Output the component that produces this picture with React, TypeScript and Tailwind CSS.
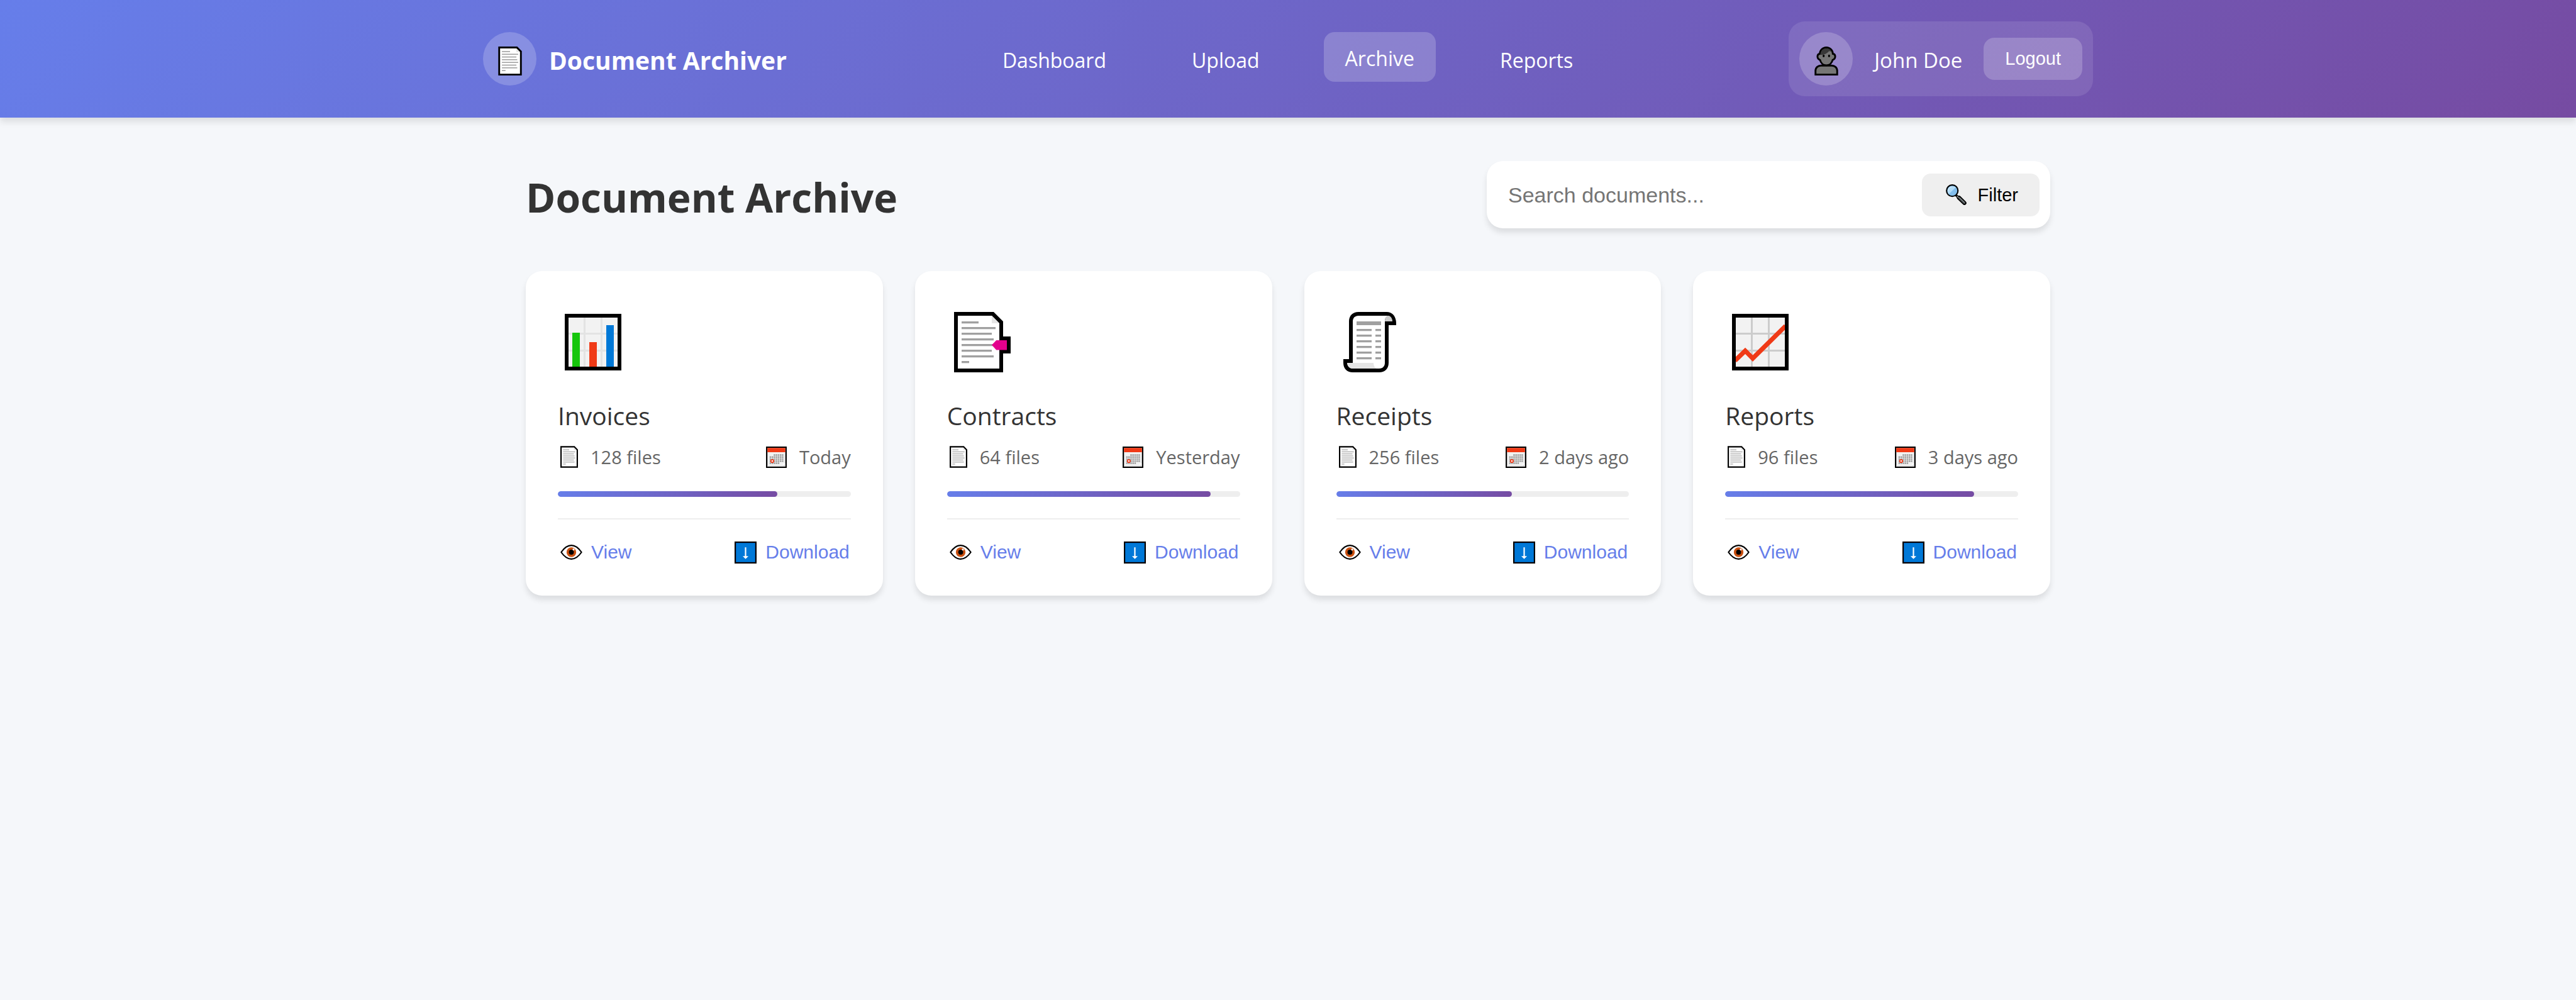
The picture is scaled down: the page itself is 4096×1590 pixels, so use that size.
import type { ReactNode } from "react";

const DOC_LINES: [number, number][] = [
  [2.5, 4.5], [4, 9], [5.5, 8], [7, 8.5], [8.5, 9], [10, 8], [11.5, 8.5], [13, 2],
];

function DocLines() {
  return (
    <>
      {DOC_LINES.map(([y, w]) => (
        <rect key={y} x="2" y={y} width={w} height=".55" fill="#a0a0a0" />
      ))}
    </>
  );
}

function PageIcon({ className }: { className: string }) {
  return (
    <svg viewBox="0 0 13 16" className={className} aria-hidden="true">
      <path d="M0 0H10.5L13 2.5V16H0Z" fill="#000" />
      <path d="M1 1H10L12 3V15H1Z" fill="#fff" />
      <path d="M10 1V3H12Z" fill="#e5e5e5" />
      <DocLines />
    </svg>
  );
}

function TabbedPageIcon() {
  return (
    <svg viewBox="0 0 16 16" className="size-24" aria-hidden="true">
      <path d="M0 0H10.5L13 2.5V6.5H15V11H13V16H0Z" fill="#000" />
      <path d="M1 1H10L12 3V15H1Z" fill="#fff" />
      <path d="M10 1V3H12Z" fill="#e5e5e5" />
      <DocLines />
      <path d="M10 8.75L11.2 7.5H14V10.1H11.2Z" fill="#e3008c" />
    </svg>
  );
}

function ReceiptIcon() {
  return (
    <svg viewBox="0 0 16 16" className="size-24" aria-hidden="true">
      <path d="M4 0H11.5C13 0 14 1.2 14 3V3.5H12V13.5C12 15 11 16 9.5 16H2.5C1 16 0 15 0 13.5V12.5H1.5V2.5C1.5 1 2.5 0 4 0Z" fill="#000" />
      <path d="M4 1C3 1 2.5 1.7 2.5 2.5V13.5H1C1.1 14.5 1.7 15 2.5 15H9.5C10.5 15 11 14.3 11 13.5V2.5C11 1.7 11.4 1.1 12 1Z" fill="#fff" />
      <path d="M11 2.5C11 1.5 11.4 1 12 1C12.6 1.1 13 1.8 13 2.5Z" fill="#ccc" />
      <path d="M1 13.5H8C8 14.3 8.4 15 9 15H2.5C1.7 15 1.1 14.4 1 13.5Z" fill="#e5e5e5" />
      <rect x="3.5" y="2.5" width="6.5" height="1" fill="#a0a0a0" />
      {[4.5, 6, 7.5, 9, 10.5, 12].map((y) => (
        <g key={y} fill="#a0a0a0">
          <rect x="3.5" y={y} width="4" height=".55" />
          <rect x="8.5" y={y} width="1.5" height=".55" />
        </g>
      ))}
    </svg>
  );
}

function ChartFrame({ grid, children }: { grid: string; children: ReactNode }) {
  return (
    <svg viewBox="0 -.5 16 16" className="size-24" aria-hidden="true">
      <rect x=".5" y=".5" width="14" height="14" fill="#f2f2f2" />
      <path d="M5.25 1V14M9.75 1V14M1 5.25H14M1 9.75H14" stroke={grid} strokeWidth=".5" />
      {children}
      <rect x=".5" y=".5" width="14" height="14" fill="none" stroke="#000" />
    </svg>
  );
}

function BarChartIcon() {
  return (
    <ChartFrame grid="#e3e3e3">
      <rect x="2" y="5" width="2" height="9" fill="#16c60c" />
      <rect x="6.5" y="7.5" width="2" height="6.5" fill="#f03a17" />
      <rect x="11" y="3" width="2" height="11" fill="#0078d7" />
    </ChartFrame>
  );
}

function TrendIcon() {
  return (
    <ChartFrame grid="#ccc">
      <path d="M.8 12.4L3.5 9.8L5.5 11.8L14.2 3.2" fill="none" stroke="#f03a17" strokeWidth="1.2" />
    </ChartFrame>
  );
}

function CalendarIcon() {
  const cells: [number, number][] = [];
  for (let row = 0; row < 5; row++) {
    for (let col = 0; col < 7; col++) {
      if ((row === 0 && col < 2) || (row === 4 && col > 4)) continue;
      cells.push([2.6 + col * 1.48, 5.6 + row * 1.48]);
    }
  }
  return (
    <svg viewBox="0 0 15 15.5" className="h-[34px] w-[33px]" aria-hidden="true">
      <rect width="15" height="15.5" fill="#000" />
      <rect x="1" y="1" width="13" height="13.5" fill="#f2f2f2" />
      <rect x="1" y="1" width="13" height="3.1" fill="#f03a17" />
      {cells.map(([x, y]) => (
        <rect key={`${x}-${y}`} x={x} y={y} width="1.1" height="1.1" fill="#999" />
      ))}
      <circle cx="4.5" cy="10.5" r="1" fill="#fff" stroke="#f03a17" strokeWidth=".8" />
      <path d="M1 13.9H12.4L14 12.3V14.5H1Z" fill="#dcdcdc" />
      <path d="M12.4 13.9V12.3H14Z" fill="#fff" />
    </svg>
  );
}

function EyeIcon() {
  return (
    <svg viewBox="0 0 16 11" className="h-6 w-[35px]" aria-hidden="true">
      <path d="M.6 5.5C3 2 5.6 .5 8 .5S13 2 15.4 5.5C13 9 10.4 10.5 8 10.5S3 9 .6 5.5Z" fill="#fff" stroke="#000" strokeLinejoin="round" />
      <circle cx="8" cy="5.5" r="3.5" fill="#ca5010" />
      <circle cx="8" cy="5.5" r="1.8" fill="#000" />
      <circle cx="9.6" cy="3.5" r=".7" fill="#fff" />
    </svg>
  );
}

function DownloadIcon() {
  return (
    <svg viewBox="0 0 16 16" className="size-[35px]" aria-hidden="true">
      <rect width="16" height="16" fill="#000" />
      <rect x="1" y="1" width="14" height="14" fill="#0078d7" />
      <path d="M7.5 4.2H8.5V10.6H10.1L8 12.7L5.9 10.6H7.5Z" fill="#fff" />
    </svg>
  );
}

function SearchIcon() {
  return (
    <svg viewBox="30 38 142 142" className="size-[33px]" aria-hidden="true">
      <path d="M100 113L114 127" stroke="#000" strokeWidth="16" />
      <path d="M120 130L157 166" stroke="#000" strokeWidth="28" strokeLinecap="round" />
      <path d="M106 119L118 130" stroke="#999" strokeWidth="6" />
      <path d="M122 132L156 165" stroke="#5d6466" strokeWidth="12" strokeLinecap="round" />
      <path d="M125 130L158 161" stroke="#9aa2a5" strokeWidth="4" strokeLinecap="round" />
      <circle cx="74" cy="82" r="39" fill="#83beec" stroke="#000" strokeWidth="9" />
      <path d="M49 107A35 35 0 0 1 98 58Z" fill="#b3dcf7" />
      <path d="M46 84A28 28 0 0 1 72 54" fill="none" stroke="#d6edfb" strokeWidth="5" />
    </svg>
  );
}

function PersonIcon() {
  return (
    <svg viewBox="0 0 13 16" className="h-[46px] w-[38px]" aria-hidden="true">
      <path d="M.5 15.5V13.5C.5 11.5 2 10.5 3.5 10.5H9.5C11 10.5 12.5 11.5 12.5 13.5V15.5Z" fill="#767676" stroke="#000" />
      <path d="M6.5 .5C8.6 .5 10.1 2.2 10.1 4C11 4.1 11.4 4.7 11.4 5.5C11.4 6.4 10.9 7.1 10 7.4C9.6 9 8.3 10.4 6.5 10.4S3.4 9 3 7.4C2.1 7.1 1.6 6.4 1.6 5.5C1.6 4.7 2 4.1 2.9 4C2.9 2.2 4.4 .5 6.5 .5Z" fill="#767676" stroke="#000" />
      <path d="M3.2 4.6C3.2 2.4 4.6 1 6.5 1C7.8 1 8.8 1.6 9.3 2.9L8 2.5C7 3.8 5.3 4.6 3.2 4.6Z" fill="#383838" />
      <ellipse cx="5" cy="5.2" rx=".55" ry=".75" fill="#000" />
      <ellipse cx="8" cy="5.2" rx=".55" ry=".75" fill="#000" />
    </svg>
  );
}

const NAV = ["Dashboard", "Upload", "Archive", "Reports"];

const FOLDERS = [
  { name: "Invoices", files: "128 files", when: "Today", fill: 75, icon: <BarChartIcon /> },
  { name: "Contracts", files: "64 files", when: "Yesterday", fill: 90, icon: <TabbedPageIcon /> },
  { name: "Receipts", files: "256 files", when: "2 days ago", fill: 60, icon: <ReceiptIcon /> },
  { name: "Reports", files: "96 files", when: "3 days ago", fill: 85, icon: <TrendIcon /> },
];

function Header() {
  return (
    <header className="bg-[linear-gradient(135deg,#667eea_0%,#764ba2_100%)] py-[34px] text-white shadow-[0_7px_10px_rgba(0,0,0,0.1)]">
      <div className="mx-auto flex max-w-[2560px] items-center justify-between">
        <div className="flex items-center gap-5">
          <span className="flex size-[85px] items-center justify-center rounded-full bg-white/20 pt-1.5">
            <PageIcon className="h-[46px] w-[38px]" />
          </span>
          <span className="pt-1 text-[39px] leading-[54px] font-bold">Document Archiver</span>
        </div>
        <nav className="flex gap-[68px]">
          {NAV.map((label) => (
            <a
              key={label}
              href="#"
              aria-current={label === "Archive" ? "page" : undefined}
              className="rounded-[17px] px-[34px] pt-[19px] pb-[15px] text-[32px] leading-[45px] aria-[current=page]:-translate-y-[3px] aria-[current=page]:bg-white/20"
            >
              {label}
            </a>
          ))}
        </nav>
        <div className="flex items-center gap-[34px] rounded-[26px] bg-white/10 p-[17px]">
          <span className="flex size-[85px] items-center justify-center rounded-full bg-white/20 pt-1.5">
            <PersonIcon />
          </span>
          <span className="pt-1 text-[33px] leading-[45px]">John Doe</span>
          <button
            type="button"
            className="rounded-[17px] bg-white/20 px-[34px] py-[17px] font-['Liberation_Sans',Arial,sans-serif] text-[29px] leading-[33px]"
          >
            Logout
          </button>
        </div>
      </div>
    </header>
  );
}

function FolderCard({ name, files, when, fill, icon }: (typeof FOLDERS)[number]) {
  return (
    <article className="rounded-[26px] bg-white p-[51px] shadow-[0_7px_10px_rgba(0,0,0,0.1)]">
      <div className="pt-3.5 pb-[42px] pl-[11px]">{icon}</div>
      <h2 className="text-[39px] leading-[54px] text-[#333]">{name}</h2>
      <div className="mt-[18px] flex justify-between text-[29px] leading-[41px] text-[#666]">
        <span className="flex items-center gap-5 pl-1">
          <PageIcon className="h-[35px] w-7" />
          {files}
        </span>
        <span className="flex items-center gap-5">
          <CalendarIcon />
          {when}
        </span>
      </div>
      <div className="mt-[34px] h-[9px] overflow-hidden rounded-[5px] bg-[#eee]">
        <div
          className="h-full rounded-[5px] bg-[linear-gradient(135deg,#667eea_0%,#764ba2_100%)]"
          style={{ width: `${fill}%` }}
        />
      </div>
      <div className="mt-[34px] flex justify-between border-t-2 border-[#eee] pt-[34px] pr-0.5 pl-1 font-['Liberation_Sans',Arial,sans-serif] text-[30px] leading-[36px] text-[#667eea]">
        <button type="button" className="flex items-center gap-3.5">
          <EyeIcon />
          View
        </button>
        <button type="button" className="flex items-center gap-3.5">
          <DownloadIcon />
          Download
        </button>
      </div>
    </article>
  );
}

export default function App() {
  return (
    <div className="min-h-screen bg-[#f5f7fa] font-['Open_Sans','Noto_Sans',sans-serif]">
      <Header />
      <main className="mx-auto max-w-[2560px] px-[68px] pt-[69px] pb-[68px]">
        <div className="mb-[68px] flex items-center justify-between">
          <h1 className="pt-2 text-[64px] leading-[88px] font-bold text-[#333]">Document Archive</h1>
          <div className="flex h-[107px] w-[896px] items-center rounded-[26px] bg-white px-[17px] font-['Liberation_Sans',Arial,sans-serif] shadow-[0_7px_10px_rgba(0,0,0,0.1)]">
            <input
              type="text"
              aria-label="Search documents"
              placeholder="Search documents..."
              className="min-w-0 flex-1 px-[17px] text-[34px] leading-[40px] text-[#333] outline-none placeholder:text-[#757575]"
            />
            <button
              type="button"
              className="flex items-center gap-[18px] rounded-[14px] bg-[#efefef] py-[17px] pr-[34px] pl-[38px] text-[29px] leading-[34px] text-black"
            >
              <SearchIcon />
              Filter
            </button>
          </div>
        </div>
        <div className="grid grid-cols-4 gap-[51px]">
          {FOLDERS.map((folder) => (
            <FolderCard key={folder.name} {...folder} />
          ))}
        </div>
      </main>
    </div>
  );
}
